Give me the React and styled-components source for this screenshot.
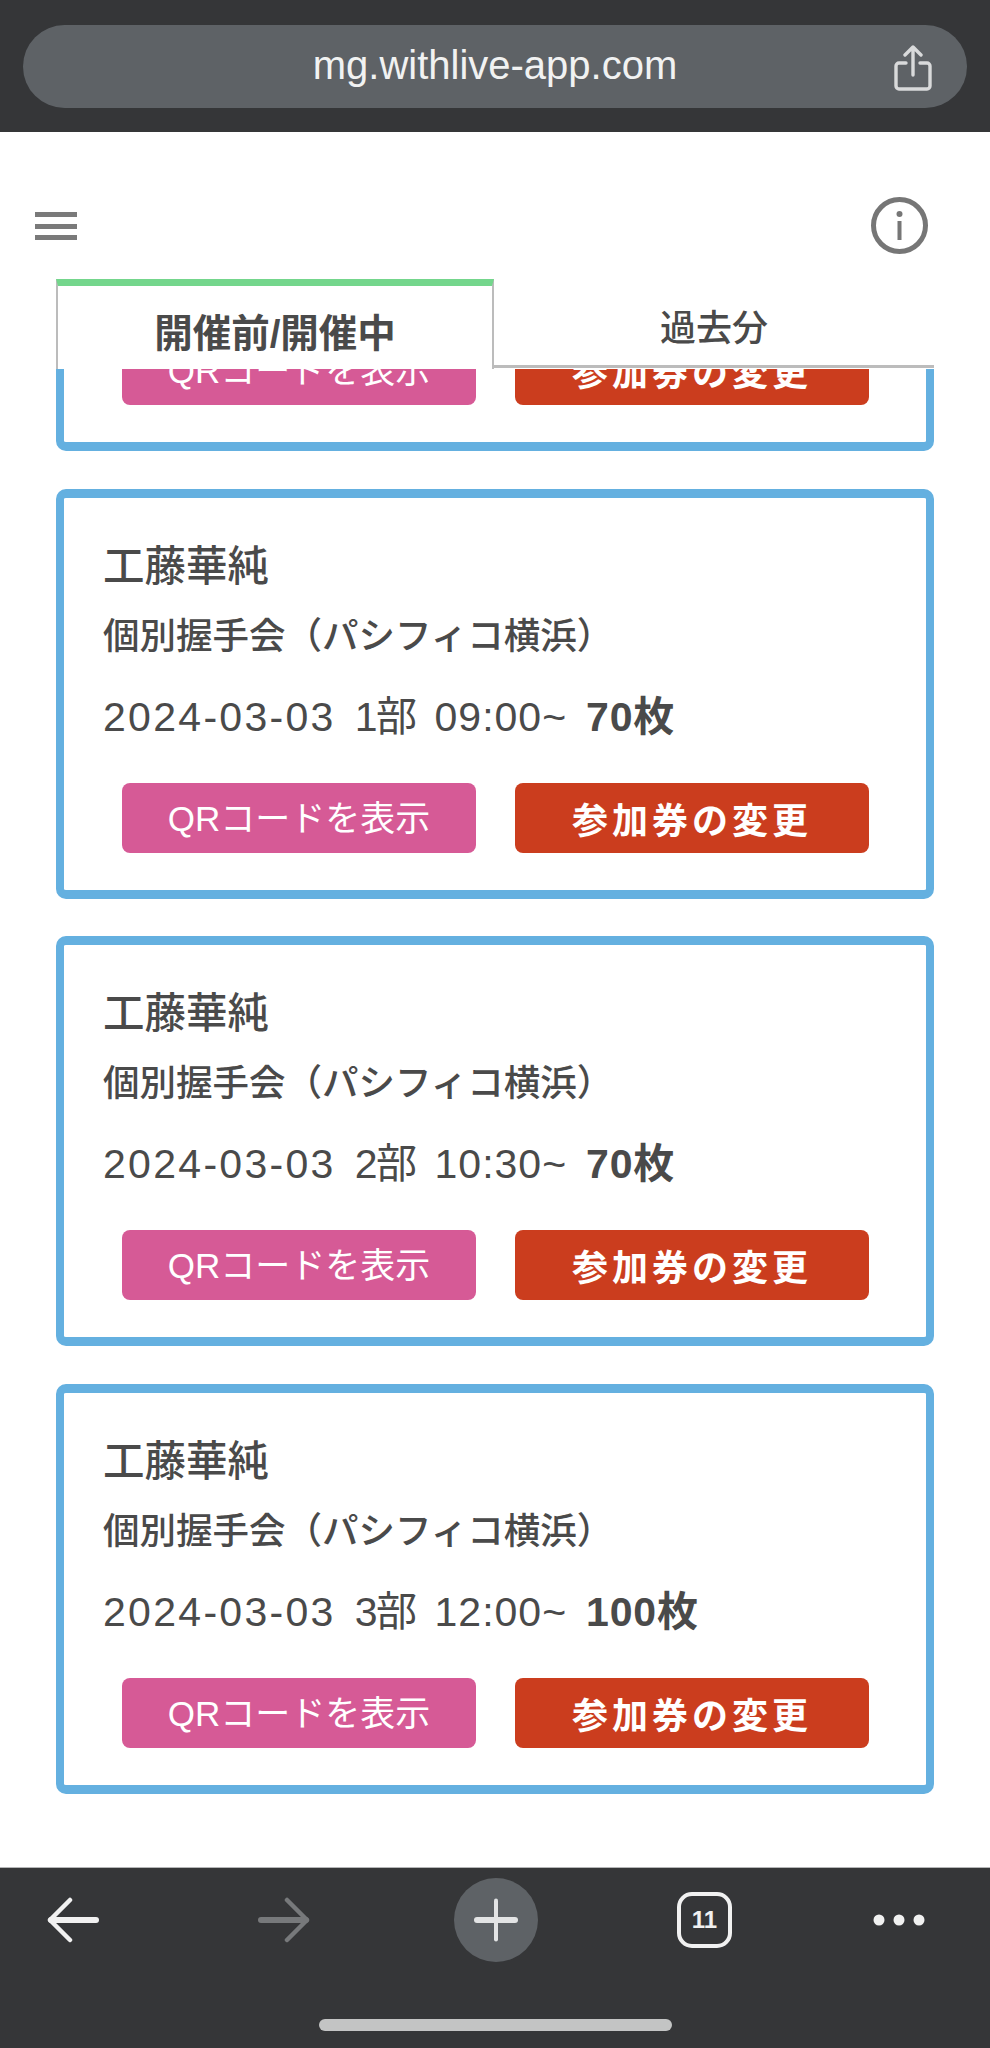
import React from "react";
import styled, { createGlobalStyle } from "styled-components";

const GlobalStyle = createGlobalStyle`
  html, body {
    margin: 0;
    padding: 0;
    background: #fff;
  }
  * {
    box-sizing: border-box;
  }
`;

const FONT = `"Liberation Sans", "Noto Sans CJK JP", sans-serif`;

const Page = styled.div`
  display: flex;
  flex-direction: column;
  width: 990px;
  height: 2048px;
  overflow: hidden;
  font-family: ${FONT};
  color: #4a4a4a;
  background: #fff;
`;

const BrowserBar = styled.div`
  flex: none;
  height: 132px;
  padding: 25px 23px 24px;
  background: #353638;
`;

const UrlPill = styled.div`
  position: relative;
  height: 83px;
  border-radius: 42px;
  background: #5e6266;
  color: #f1f2f2;
  font-size: 40px;
  line-height: 80px;
  text-align: center;
`;

const ShareIcon = styled.svg`
  position: absolute;
  right: 35px;
  top: 20px;
  width: 38px;
  height: 46px;
`;

const Header = styled.div`
  flex: none;
  display: flex;
  justify-content: space-between;
  height: 147px;
  padding: 65px 62px 0 35px;
`;

const Burger = styled.div`
  display: flex;
  flex-direction: column;
  gap: 6.5px;
  width: 42px;
  margin-top: 15px;
`;

const BurgerBar = styled.span`
  display: block;
  height: 5px;
  background: #7a7a7a;
`;

const TabRow = styled.div`
  flex: none;
  display: flex;
  height: 90px;
  margin: 0 56px;
`;

const ActiveTab = styled.div`
  width: 438px;
  height: 90px;
  border-top: 7px solid #74d68c;
  border-left: 2px solid #bcbcbc;
  border-right: 2px solid #bcbcbc;
  font-size: 38.5px;
  font-weight: 700;
  line-height: 96px;
  text-align: center;
`;

const PastTab = styled.div`
  flex: 1;
  height: 89px;
  border-bottom: 3px solid #bcbcbc;
  font-size: 36px;
  font-weight: 500;
  line-height: 100px;
  text-align: center;
`;

const Scroller = styled.div`
  flex: 1;
  min-height: 0;
  overflow: hidden;
`;

const CardList = styled.div`
  display: flex;
  flex-direction: column;
  gap: 37.5px;
  margin: -43px 56px 0;
`;

const Card = styled.div`
  padding: ${(props) => (props.$clipped ? "0" : "44px")} 39px 37px;
  border: solid #64b0e0;
  border-width: 9px 8px;
  border-radius: 10px;
  background: #fff;
`;

const Name = styled.div`
  font-size: 41.5px;
  font-weight: 500;
  line-height: 50px;
`;

const EventTitle = styled.div`
  margin-top: 20px;
  font-size: 36.5px;
  font-weight: 500;
  line-height: 50px;
  white-space: nowrap;
`;

const SessionRow = styled.div`
  display: flex;
  gap: 19px;
  margin-top: 30px;
  font-size: 41px;
  line-height: 50px;
  white-space: nowrap;
`;

const SessionDate = styled.span`
  letter-spacing: 2.3px;
`;

const SessionPart = styled.span`
  letter-spacing: -1.5px;
`;

const SessionTime = styled.span`
  letter-spacing: 1px;
`;

const Count = styled.span`
  font-weight: 700;
  letter-spacing: 0.8px;
`;

const Actions = styled.div`
  display: flex;
  gap: 39px;
  margin: ${(props) => (props.$flush ? "0" : "41px")} 18px 0 19px;
`;

const ActionButton = styled.div`
  flex: 1;
  height: 70px;
  border-radius: 8px;
  background: ${(props) => props.$bg};
  color: #fff;
  font-size: ${(props) => (props.$strong ? "36px" : "35px")};
  font-weight: ${(props) => (props.$strong ? 700 : 400)};
  letter-spacing: ${(props) => (props.$strong ? "4px" : "0")};
  line-height: ${(props) => (props.$strong ? "78px" : "72px")};
  text-align: center;
  overflow: hidden;
`;

const Toolbar = styled.div`
  flex: none;
  position: relative;
  display: flex;
  align-items: flex-start;
  gap: 141px;
  height: 181px;
  padding: 10px 0 0 47px;
  border-top: 1px solid #b5b6b7;
  background: #353638;
`;

const ToolIcon = styled.svg`
  flex: none;
  width: ${(props) => props.$w}px;
  height: 84px;
  margin-left: ${(props) => props.$shift || 0}px;
`;

const HomeBar = styled.div`
  position: absolute;
  left: 319px;
  top: 151px;
  width: 353px;
  height: 12px;
  border-radius: 6px;
  background: #c3c4c4;
`;

const ActionRow = ({ flush }) => (
  <Actions $flush={flush}>
    <ActionButton $bg="#d65a96">QRコードを表示</ActionButton>
    <ActionButton $bg="#cb3d1e" $strong>
      参加券の変更
    </ActionButton>
  </Actions>
);

const sessions = [
  { part: "1部", time: "09:00~", count: "70枚" },
  { part: "2部", time: "10:30~", count: "70枚" },
  { part: "3部", time: "12:00~", count: "100枚" },
];

export default function App() {
  return (
    <Page>
      <GlobalStyle />
      <BrowserBar>
        <UrlPill>
          mg.withlive-app.com
          <ShareIcon viewBox="0 0 38 46" fill="none" stroke="#d9dadb" strokeWidth="3.4" strokeLinecap="round" strokeLinejoin="round">
            <path d="M12 18H5a3 3 0 0 0-3 3v20a3 3 0 0 0 3 3h28a3 3 0 0 0 3-3V21a3 3 0 0 0-3-3h-7" />
            <path d="M19 30V2M11 10l8-8 8 8" />
          </ShareIcon>
        </UrlPill>
      </BrowserBar>

      <Header>
        <Burger>
          <BurgerBar />
          <BurgerBar />
          <BurgerBar />
        </Burger>
        <svg width="57" height="57" viewBox="0 0 57 57" fill="none">
          <circle cx="28.5" cy="28.5" r="26" stroke="#767676" strokeWidth="5" />
          <circle cx="28.5" cy="17" r="3" fill="#767676" />
          <rect x="26.5" y="24" width="4" height="19" fill="#767676" />
        </svg>
      </Header>

      <TabRow>
        <ActiveTab>開催前/開催中</ActiveTab>
        <PastTab>過去分</PastTab>
      </TabRow>

      <Scroller>
        <CardList>
          <Card $clipped>
            <ActionRow flush />
          </Card>
          {sessions.map((s) => (
            <Card key={s.part}>
              <Name>工藤華純</Name>
              <EventTitle>個別握手会（パシフィコ横浜）</EventTitle>
              <SessionRow>
                <SessionDate>2024-03-03</SessionDate>
                <SessionPart>{s.part}</SessionPart>
                <SessionTime>{s.time}</SessionTime>
                <Count>{s.count}</Count>
              </SessionRow>
              <ActionRow />
            </Card>
          ))}
        </CardList>
      </Scroller>

      <Toolbar>
        <ToolIcon $w={52} viewBox="0 0 52 84" fill="none" stroke="#f1f1f1" strokeLinecap="round" strokeLinejoin="round">
          <path d="M4 42h45" strokeWidth="6" />
          <path d="M23 22L3 42l20 20" strokeWidth="4.5" />
        </ToolIcon>
        <ToolIcon $w={52} $shift={18} viewBox="0 0 52 84" fill="none" stroke="#77797b" strokeLinecap="round" strokeLinejoin="round">
          <path d="M3 42h45" strokeWidth="6" />
          <path d="M29 22l20 20-20 20" strokeWidth="4.5" />
        </ToolIcon>
        <ToolIcon $w={84} $shift={3} viewBox="0 0 84 84" fill="none">
          <circle cx="42" cy="42" r="42" fill="#5e6266" />
          <path d="M42 22.5v39" stroke="#e3e4e5" strokeWidth="4" strokeLinecap="round" />
          <path d="M23 42h38" stroke="#e3e4e5" strokeWidth="6" strokeLinecap="round" />
        </ToolIcon>
        <ToolIcon $w={55} $shift={-2} viewBox="0 0 55 84" fill="none">
          <rect x="2" y="16" width="51" height="52" rx="13" stroke="#f1f1f1" strokeWidth="4" />
          <text x="27.5" y="50" textAnchor="middle" fill="#f1f1f1" fontSize="24" fontWeight="700" fontFamily="Liberation Sans">
            11
          </text>
        </ToolIcon>
        <ToolIcon $w={52} viewBox="0 0 52 84" fill="#f1f1f1">
          <circle cx="6" cy="42" r="5.5" />
          <circle cx="26" cy="42" r="5.5" />
          <circle cx="46" cy="42" r="5.5" />
        </ToolIcon>
        <HomeBar />
      </Toolbar>
    </Page>
  );
}
